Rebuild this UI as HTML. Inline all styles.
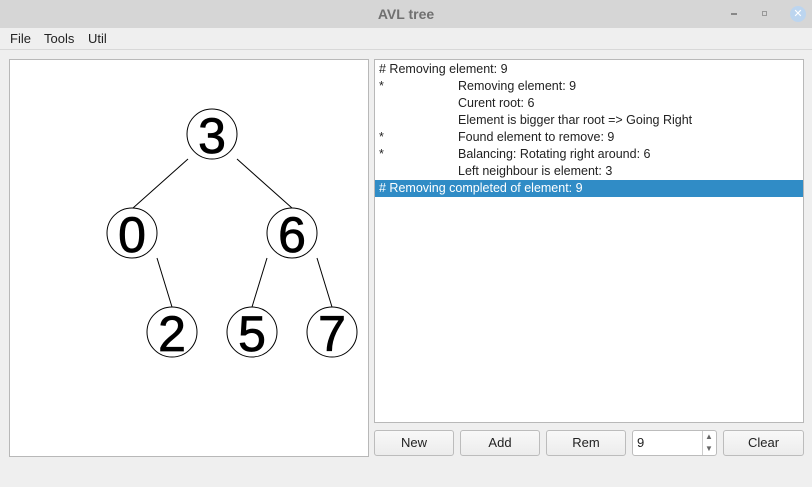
<!DOCTYPE html>
<html><head><style>
body{margin:0;width:812px;height:487px;background:#efefef;font-family:"Liberation Sans","DejaVu Sans",sans-serif;position:relative;overflow:hidden}
.title{position:absolute;left:0;top:0;width:812px;height:28px;background:#d6d6d6;text-align:center;line-height:28px;font-weight:bold;font-size:14px;color:#707070}
.menu{position:absolute;top:28px;left:0;width:812px;height:21px;border-bottom:1px solid #d8d8d8;font-size:13px;color:#222}
.menu span{position:absolute;top:3px}
.panel{position:absolute;background:#fff;border:1px solid #b8b8b8}
.row{position:absolute;left:0;height:17px;width:428px;font-size:12.5px;line-height:17px;color:#222}
.row .a{position:absolute;left:4px}
.row .b{position:absolute;left:83px}
.btn{position:absolute;top:430px;height:24px;border:1px solid #bcbcbc;border-radius:3px;background:linear-gradient(#f8f8f8,#ececec);font-size:13px;line-height:24px;text-align:center;color:#222}
</style></head><body>
<div class="title">AVL tree</div>
<div style="position:absolute;left:731px;top:13px;width:6px;height:2px;background:#888"></div>
<div style="position:absolute;left:762px;top:11px;width:5px;height:5px;border:1px solid #999;box-sizing:border-box"></div>
<div style="position:absolute;left:790px;top:6px;width:16px;height:16px;border-radius:50%;background:#bcd5ef;color:#fff;font-size:11px;line-height:16px;text-align:center">✕</div>
<div class="menu"><span style="left:10px">File</span><span style="left:44px">Tools</span><span style="left:88px">Util</span></div>
<div class="panel" style="left:9px;top:59px;width:358px;height:396px"></div>
<svg style="position:absolute;left:0;top:0" width="812" height="487">
<g stroke="#000" stroke-width="1" fill="none">
<line x1="188" y1="159" x2="133" y2="208"/><line x1="237" y1="159" x2="292" y2="208"/>
<line x1="157" y1="258" x2="172" y2="307"/><line x1="267" y1="258" x2="252" y2="307"/><line x1="317" y1="258" x2="332" y2="307"/>
<circle cx="212" cy="134" r="25"/><circle cx="132" cy="233" r="25"/><circle cx="292" cy="233" r="25"/>
<circle cx="172" cy="332" r="25"/><circle cx="252" cy="332" r="25"/><circle cx="332" cy="332" r="25"/>
</g>
<g font-family="Liberation Sans, sans-serif" font-size="50" text-anchor="middle" fill="#000" stroke="#000" stroke-width="0.8">
<text x="212" y="153">3</text><text x="132" y="252">0</text><text x="292" y="252">6</text>
<text x="172" y="351">2</text><text x="252" y="351">5</text><text x="332" y="351">7</text>
</g></svg>
<div class="panel" style="left:374px;top:59px;width:428px;height:362px">
<div class="row" style="top:1px"><span class="a"># Removing element: 9</span></div>
<div class="row" style="top:18px"><span class="a">*</span><span class="b">Removing element: 9</span></div>
<div class="row" style="top:35px"><span class="b">Curent root: 6</span></div>
<div class="row" style="top:52px"><span class="b">Element is bigger thar root =&gt; Going Right</span></div>
<div class="row" style="top:69px"><span class="a">*</span><span class="b">Found element to remove: 9</span></div>
<div class="row" style="top:86px"><span class="a">*</span><span class="b">Balancing: Rotating right around: 6</span></div>
<div class="row" style="top:103px"><span class="b">Left neighbour is element: 3</span></div>
<div class="row" style="top:120px;background:#308cc6;color:#fff"><span class="a"># Removing completed of element: 9</span></div>
</div>
<div class="btn" style="left:374px;width:78px">New</div>
<div class="btn" style="left:460px;width:78px">Add</div>
<div class="btn" style="left:546px;width:78px">Rem</div>
<div style="position:absolute;left:632px;top:430px;width:83px;height:24px;border:1px solid #bcbcbc;border-radius:3px;background:#fff;font-size:13px;line-height:24px;color:#222"><span style="position:absolute;left:4px">9</span><div style="position:absolute;left:69px;top:0;width:1px;height:24px;background:#ccc"></div><span style="position:absolute;left:72px;top:-6px;font-size:8px;color:#666">▲</span><span style="position:absolute;left:72px;top:6px;font-size:8px;color:#666">▼</span></div>
<div class="btn" style="left:723px;width:79px">Clear</div>
</body></html>
